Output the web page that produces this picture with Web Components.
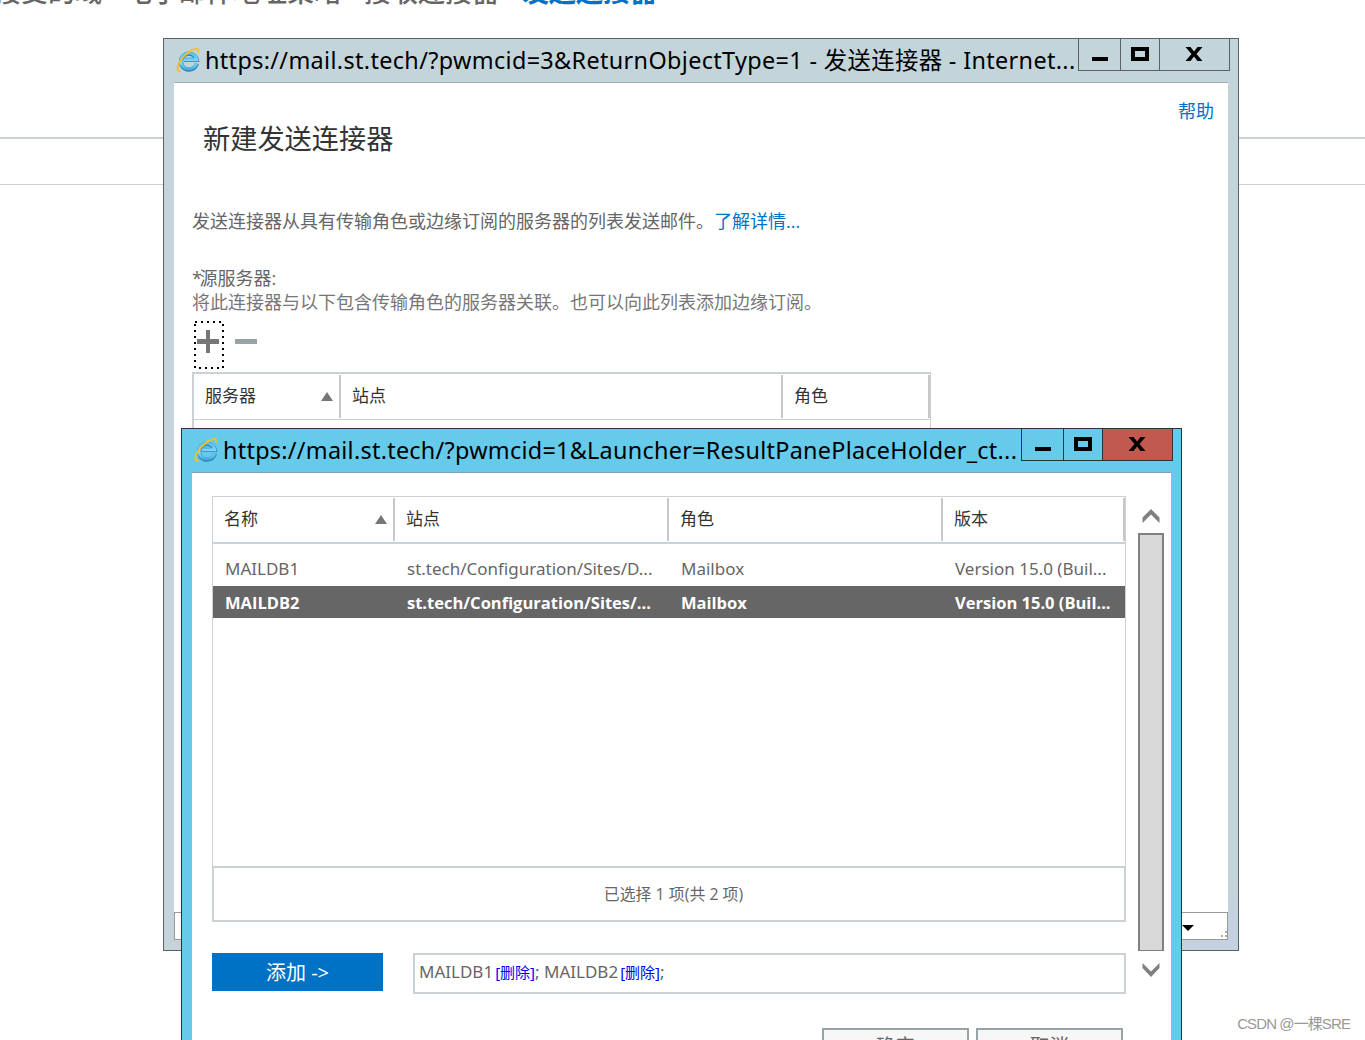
<!DOCTYPE html>
<html lang="zh-CN">
<head>
<meta charset="utf-8">
<title>发送连接器</title>
<style>
  html, body {
    margin: 0;
    width: 1365px;
    height: 1040px;
    overflow: hidden;
    background: #fff;
    font-family: "Open Sans", "Noto Sans CJK SC", sans-serif;
  }
</style>
</head>
<body>
<mail-desktop></mail-desktop>

<script>
// IE logo: blue "e" with the yellow orbit over it
const ieIcon = `
  <svg class="ie" width="24" height="26" viewBox="0 0 24 26">
    <defs><linearGradient id="g" gradientUnits="userSpaceOnUse" x1="0" y1="4" x2="0" y2="24">
      <stop offset="0" stop-color="#5ab4e4"/><stop offset=".55" stop-color="#7fdcfb"/><stop offset="1" stop-color="#3a9fd6"/>
    </linearGradient></defs>
    <path d="M20.800 16.500A8 8 0 1 1 20.800 12.800H8" fill="none" stroke="#2b7fb4" stroke-width="4.200"/>
    <path d="M20.500 16.500A8 8 0 1 1 20.800 12.800H8" fill="none" stroke="url(#g)" stroke-width="3"/>
    <path d="M4.500 23.800C.6 25 .4 20.500 4 14.500C8 8 15 2.500 19.800 1.900C22.400 1.500 22.800 3 21.800 5.600" fill="none" stroke="#f2c128" stroke-width="1.900"/>
  </svg>`;

class IeWindow extends HTMLElement {
  constructor() {
    super();
    this.attachShadow({ mode: "open" });
    this.shadowRoot.innerHTML = `
      <style>
        :host {
          display: flex;
          flex-direction: column;
          box-sizing: border-box;
          border: 1px solid var(--edge);
          background: var(--frame);
          padding: 0 10px 10px;
        }
        header {
          display: flex;
          height: 43px;
          flex: none;
          margin-right: -2px;
        }
        .ie { margin: 8px 5px 0 2px; flex: none; }
        .title {
          flex: 1;
          min-width: 0;
          font-family: "Noto Sans", "Noto Sans CJK SC", sans-serif;
          font-size: 23.400px;
          line-height: 43px;
          letter-spacing: var(--title-spacing, 0);
          white-space: nowrap;
          color: #000;
        }
        .buttons {
          display: flex;
          box-sizing: border-box;
          height: 32px;
          border: 1px solid var(--edge);
          border-top: 0;
        }
        .buttons svg + svg { border-left: 1px solid var(--edge); }
        .close { background: var(--close); }
        main {
          flex: 1;
          min-height: 0;
          border-top: 1px solid var(--line);
          background: #fff;
        }
      </style>
      <header>
        ${ieIcon}
        <div class="title"></div>
        <div class="buttons">
          <svg width="41" height="31"><path d="M13 18h16v4H13z"/></svg>
          <svg width="38" height="31"><path d="M12 10h14v10H12z" fill="none" stroke="#000" stroke-width="4"/></svg>
          <svg class="close" width="69" height="31"><path d="M25.500 8h5l3.500 4.500L37.500 8h5l-6 7 6 7h-5L34 17.500 30.500 22h-5l6-7z"/></svg>
        </div>
      </header>
      <main><slot></slot></main>`;
    this.shadowRoot.querySelector(".title").textContent = this.getAttribute("caption");
  }
}

class GridHeader extends HTMLElement {
  constructor() {
    super();
    this.attachShadow({ mode: "open" });
    const cells = this.getAttribute("columns").split(",").map((name, i) => `
      <div class="cell"><span>${name}</span>${i === 0 ? '<svg width="12" height="9"><path d="M6 0l6 9H0z" fill="#777"/></svg>' : ""}</div>`);
    this.shadowRoot.innerHTML = `
      <style>
        :host {
          display: grid;
          grid-template-columns: var(--cols);
          box-sizing: border-box;
          font-size: 17px;
          color: #333;
          padding: 1px 0;
        }
        .cell {
          display: flex;
          box-sizing: border-box;
          justify-content: space-between;
          align-items: center;
          border-right: 2px solid #c8c8c8;
          padding: 0 6px 4px 11px;
        }
        svg { margin-top: 4px; }
      </style>
      ${cells.join("")}`;
  }
}

class GridRow extends HTMLElement {
  constructor() {
    super();
    this.attachShadow({ mode: "open" });
    this.shadowRoot.innerHTML = `
      <style>
        :host {
          display: grid;
          grid-template-columns: var(--cols);
          height: 32px;
          line-height: 31px;
          font-family: "Noto Sans", sans-serif;
          font-size: 17px;
          color: #666;
          white-space: nowrap;
        }
        :host([selected]) {
          background: #666;
          color: #fff;
          font-family: "Open Sans", sans-serif;
          font-size: 16.500px;
          font-weight: 700;
          line-height: 33px;
        }
        ::slotted(span) { padding-left: 12px; }
      </style>
      <slot></slot>`;
  }
}

class ScrollRail extends HTMLElement {
  constructor() {
    super();
    this.attachShadow({ mode: "open" });
    this.shadowRoot.innerHTML = `
      <style>
        :host { display: flex; flex-direction: column; align-items: center; width: 26px; }
        .thumb {
          box-sizing: border-box;
          width: 26px;
          height: 418px;
          border: 2px solid #808080;
          border-bottom-width: 1px;
          background: #d9d9d9;
        }
      </style>
      <svg width="18" height="24"><path d="M.5 8.500L9 0l8.500 8.500V14L9 5.500.5 14z" fill="#808080"/></svg>
      <div class="thumb"></div>
      <svg width="18" height="28"><path d="M.5 12L9 20.500l8.500-8.500v5L9 26 .5 17z" fill="#808080"/></svg>`;
  }
}

class ConnectorForm extends HTMLElement {
  constructor() {
    super();
    this.attachShadow({ mode: "open" });
    this.shadowRoot.innerHTML = `
      <style>
        :host { display: flex; flex-direction: column; height: 100%; font-size: 18px; color: #666; white-space: nowrap; }
        .help { align-self: flex-end; margin: 15px 14px 0; line-height: 26px; color: #0072c6; }
        h1 { margin: -5px 0 0 29px; font-size: 27.200px; line-height: 40px; font-weight: 400; color: #333; }
        p { margin: 0 0 0 18px; line-height: 24px; }
        .intro { margin-top: 50px; }
        .intro a { color: #0072c6; }
        .label { margin-top: 33px; }
        .star { letter-spacing: -2.500px; }
        .note { color: #777; }
        .tools { display: flex; height: 48px; margin: 7px 0 4px 20px; }
        .add { box-sizing: border-box; width: 30px; height: 48px; }
        .list { box-sizing: border-box; width: 739px; margin: -1px 0 0 18px; border: solid #ccd1d5; border-width: 2px 1px 0 2px; height: 538px; }
        grid-header { --cols: 147px 442px 147px; height: 46px; border-bottom: 1px solid #ccd1d5; }
        footer { display: flex; box-sizing: border-box; height: 28px; border: 1px solid #999; margin-top: auto; justify-content: flex-end; }
      </style>
      <a class="help">帮助</a>
      <h1>新建发送连接器</h1>
      <p class="intro">发送连接器从具有传输角色或边缘订阅的服务器的列表发送邮件。<a>了解详情...</a></p>
      <p class="label"><span class="star">*</span>源服务器:</p>
      <p class="note">将此连接器与以下包含传输角色的服务器关联。也可以向此列表添加边缘订阅。</p>
      <div class="tools">
        <svg class="add" width="30" height="48">
          <rect x="1" y="1" width="28" height="46" fill="none" stroke="#000" stroke-width="2" stroke-dasharray="2 4"/>
          <path d="M3 18h9V9h4v9h9v5h-9v9h-4v-9H3z" fill="#777"/>
        </svg>
        <svg width="34" height="48"><path d="M11 18h22v5H11z" fill="#98a3a6"/></svg>
      </div>
      <div class="list"><grid-header columns="服务器,站点,角色"></grid-header></div>
      <footer>
        <svg width="46" height="26">
          <path d="M1 12h12l-6 6z"/>
          <path d="M44 18h2v2h-2zM44 22h2v2h-2zM40 22h2v2h-2z" fill="#aaa"/>
        </svg>
      </footer>`;
  }
}

class ServerPicker extends HTMLElement {
  constructor() {
    super();
    this.attachShadow({ mode: "open" });
    this.shadowRoot.innerHTML = `
      <style>
        :host { display: flex; padding: 23px 7px 0 20px; gap: 12px; color: #666; white-space: nowrap; }
        .body { width: 914px; flex: none; }
        .list { --cols: 182px 274px 274px 182px; box-sizing: border-box; height: 370px; border: 1px solid #ccd1d5; border-bottom: 0; }
        grid-header { height: 47px; border-bottom: 2px solid #ccd1d5; margin-bottom: 9px; }
        grid-row + grid-row { margin-top: 1px; }
        .status { box-sizing: border-box; height: 56px; border: 2px solid #ccd1d5; line-height: 52px; text-align: center; font-size: 15.900px; padding-left: 9px; }
        .picked { display: flex; gap: 30px; margin-top: 31px; }
        .add { width: 171px; height: 38px; background: #0072c6; color: #fff; font-size: 20px; line-height: 39px; text-align: center; }
        .names { box-sizing: border-box; flex: 1; height: 41px; border: 2px solid #ccd1d5; padding-left: 4px; line-height: 34px; font-family: "Noto Sans", "Noto Sans CJK SC", sans-serif; font-size: 17px; }
        .names a { color: #00f; font-size: 15px; margin-left: 2px; }
        .actions { display: flex; justify-content: flex-end; gap: 7px; margin: 34px 3px 0 0; }
        .actions div { box-sizing: border-box; width: 147px; height: 40px; border: 2px solid #98a3a6; background: #f7f7f7; text-align: center; font-size: 19.500px; line-height: 32px; }
        scroll-rail { margin-top: 13px; }
      </style>
      <div class="body">
        <div class="list">
          <grid-header columns="名称,站点,角色,版本"></grid-header>
          <grid-row><span>MAILDB1</span><span>st.tech/Configuration/Sites/D...</span><span>Mailbox</span><span>Version 15.0 (Buil...</span></grid-row>
          <grid-row selected><span>MAILDB2</span><span>st.tech/Configuration/Sites/...</span><span>Mailbox</span><span>Version 15.0 (Buil...</span></grid-row>
        </div>
        <div class="status">已选择 1 项(共 2 项)</div>
        <div class="picked">
          <div class="add">添加 -&gt;</div>
          <div class="names">MAILDB1<a>[删除]</a>; MAILDB2<a>[删除]</a>;</div>
        </div>
        <div class="actions"><div>确定</div><div>取消</div></div>
      </div>
      <scroll-rail></scroll-rail>`;
  }
}

class MailDesktop extends HTMLElement {
  constructor() {
    super();
    this.attachShadow({ mode: "open" });
    this.shadowRoot.innerHTML = `
      <style>
        :host { display: flow-root; position: relative; width: 1365px; height: 1040px; overflow: hidden; }
        nav { display: flex; gap: 23px; margin: -28px 0 0 -6px; height: 40px; line-height: 40px; font-size: 27px; font-weight: 500; color: #666; white-space: nowrap; }
        nav .on { color: #0072c6; font-weight: 700; }
        .band { height: 45px; margin-top: 125px; border-top: 2px solid #ccd1d5; border-bottom: 1px solid #ccd1d5; }
        ie-window { position: absolute; }
        .back { left: 163px; top: 38px; width: 1076px; height: 913px; --frame: linear-gradient(to top left, #c5d0e0 30px, #c3d5da 60px); --edge: #5b6068; --line: #a3abb8; --close: transparent; --title-spacing: .35px; }
        .front { left: 181px; top: 428px; width: 1001px; height: 640px; --frame: #66caea; --edge: #2c3439; --line: #7aa3b8; --close: #c1594f; --title-spacing: .27px; }
        .mark { position: absolute; right: 15px; bottom: 5px; font: 15px/22px "Liberation Sans", "Noto Sans CJK SC", sans-serif; letter-spacing: -.9px; color: #999; }
      </style>
      <nav><span>接受的域</span><span>电子邮件地址策略</span><span>接收连接器</span><span class="on">发送连接器</span></nav>
      <div class="band"></div>
      <ie-window class="back" caption="https://mail.st.tech/?pwmcid=3&amp;ReturnObjectType=1 - 发送连接器 - Internet..."><connector-form></connector-form></ie-window>
      <ie-window class="front" caption="https://mail.st.tech/?pwmcid=1&amp;Launcher=ResultPanePlaceHolder_ct..."><server-picker></server-picker></ie-window>
      <div class="mark">CSDN @一棵SRE</div>`;
  }
}

window.customElements.define("grid-header", GridHeader);
window.customElements.define("grid-row", GridRow);
window.customElements.define("scroll-rail", ScrollRail);
window.customElements.define("ie-window", IeWindow);
window.customElements.define("connector-form", ConnectorForm);
window.customElements.define("server-picker", ServerPicker);
window.customElements.define("mail-desktop", MailDesktop);
</script>
</body>
</html>
